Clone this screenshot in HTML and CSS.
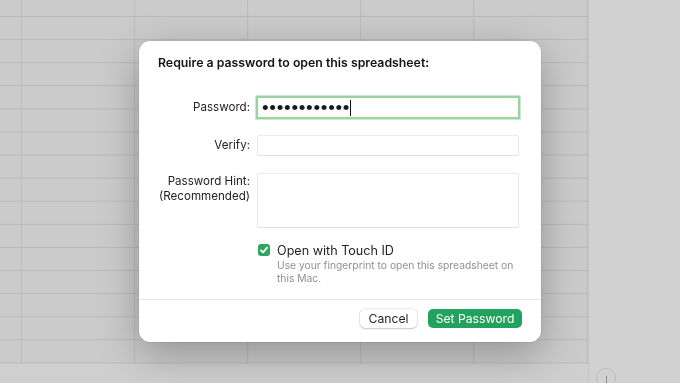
FILE: index.html
```html
<!DOCTYPE html>
<html>
<head>
<meta charset="utf-8">
<link rel="stylesheet" href="styles.css">
</head>
<body>
<div class="app">
  <div class="sheet-col">
    <div class="sheet"></div>
    <div class="sheet-foot"></div>
  </div>
  <div class="sidebar">
    <div class="round-btn"><span class="round-line"></span></div>
  </div>
</div>

<div class="overlay">
  <div class="dialog">
    <h1 class="title">Require a password to open this spreadsheet:</h1>
    <div class="form">
      <label class="lbl">Password:</label>
      <div class="field focused"><span class="dots">••••••••••••</span><span class="caret"></span></div>

      <label class="lbl">Verify:</label>
      <div class="field"></div>

      <label class="lbl lbl-top">Password Hint:<br>(Recommended)</label>
      <div class="field area"></div>

      <div class="spacer"></div>
      <div class="touch">
        <div class="check-row">
          <span class="checkbox">
            <svg width="12" height="12" viewBox="0 0 12 12"><path d="M3 6.3 L5.1 8.4 L9.1 3.6" fill="none" stroke="#fff" stroke-width="1.8" stroke-linecap="round" stroke-linejoin="round"/></svg>
          </span>
          <span class="check-label">Open with Touch ID</span>
        </div>
        <p class="desc">Use your fingerprint to open this spreadsheet on this Mac.</p>
      </div>
    </div>
    <div class="footer">
      <button class="btn">Cancel</button>
      <button class="btn primary">Set Password</button>
    </div>
  </div>
</div>
</body>
</html>
```

FILE: styles.css
```css
* { box-sizing: border-box; }
html, body { margin: 0; padding: 0; }
body {
  width: 680px;
  height: 383px;
  overflow: hidden;
  font-family: Inter, "Liberation Sans", sans-serif;
  background: #cfcfcf;
}
.app {
  display: flex;
  width: 680px;
  height: 383px;
}
.sheet-col {
  width: 588px;
  display: flex;
  flex-direction: column;
}
.sheet {
  height: 364px;
  background-color: #cbcbcb;
  background-image:
    linear-gradient(to right, #bababa 1px, transparent 1px),
    linear-gradient(to bottom, #bababa 1px, transparent 1px);
  background-size: 113.1px 23.1px;
  background-position: 21px 16px;
}
.sheet-foot {
  flex: 1;
  background: #cfcfcf;
}
.sidebar {
  flex: 1;
  background: #d1d1d1;
  border-left: 1px solid #c3c3c3;
  display: flex;
  flex-direction: column;
  justify-content: flex-end;
  padding-left: 7px;
}
.round-btn {
  width: 20px;
  height: 20px;
  border-radius: 50%;
  border: 1px solid #bcbcbc;
  margin-bottom: -5px;
  display: flex;
  justify-content: center;
  padding-top: 7px;
}
.round-line {
  width: 1px;
  height: 10px;
  background: #8e8e8e;
}

.overlay {
  position: fixed;
  inset: 0;
  display: flex;
  align-items: center;
  justify-content: center;
}
.dialog {
  width: 402px;
  height: 301px;
  background: #ffffff;
  border-radius: 11px;
  box-shadow: 0 0 0 0.5px rgba(0,0,0,0.12), 0 12px 40px rgba(0,0,0,0.28);
  display: flex;
  flex-direction: column;
  color: #262626;
}
.title {
  margin: 0;
  padding: 14px 19px 0;
  font-size: 12.3px;
  line-height: 16px;
  font-weight: 600;
  color: #141414;
}
.form {
  display: grid;
  grid-template-columns: 92px 260px;
  column-gap: 8px;
  row-gap: 19px;
  padding: 27px 0 0 19px;
}
.lbl {
  font-size: 11.6px;
  line-height: 15px;
  text-align: right;
  align-self: center;
  color: #222;
}
.lbl-top {
  align-self: start;
}
.field {
  height: 19px;
  background: #fff;
  box-shadow: 0 0 0 0.5px rgba(0,0,0,0.16), 0 0.5px 1.5px rgba(0,0,0,0.12);
  display: flex;
  align-items: center;
  padding-left: 4px;
}
.field.focused {
  box-shadow: 0 0 0 2.5px #9bd3a0;
}
.dots {
  font-family: "Liberation Sans", sans-serif;
  font-size: 19px;
  letter-spacing: 0.7px;
  color: #1a1a1a;
  line-height: 19px;
}
.caret {
  width: 1px;
  height: 16px;
  background: #111;
  margin-left: 0;
}
.area {
  height: 53px;
}
.touch {
  margin-top: -4px;
}
.check-row {
  display: flex;
  align-items: center;
  height: 16px;
  gap: 7px;
}
.checkbox {
  width: 12px;
  height: 12px;
  border-radius: 3px;
  background: #2da760;
  display: flex;
}
.check-label {
  font-size: 12.6px;
  color: #1e1e1e;
}
.desc {
  margin: 1px 0 0 19px;
  font-size: 10.3px;
  line-height: 13px;
  color: #909090;
  width: 240px;
}
.footer {
  margin-top: 14px;
  border-top: 1px solid #e4e4e4;
  display: flex;
  justify-content: flex-end;
  gap: 11px;
  padding: 9px 19px 0 0;
}
.btn {
  font-family: inherit;
  font-size: 12.2px;
  height: 19px;
  padding: 0;
  border: none;
  border-radius: 5px;
  background: #fff;
  color: #1e1e1e;
  box-shadow: 0 0 0 0.5px rgba(0,0,0,0.14), 0 1px 2px rgba(0,0,0,0.16);
  line-height: 19px;
  width: 57px;
  white-space: nowrap;
}
.btn.primary {
  width: 94px;
  background: #22a35d;
  color: #fff;
  box-shadow: none;
}
```
